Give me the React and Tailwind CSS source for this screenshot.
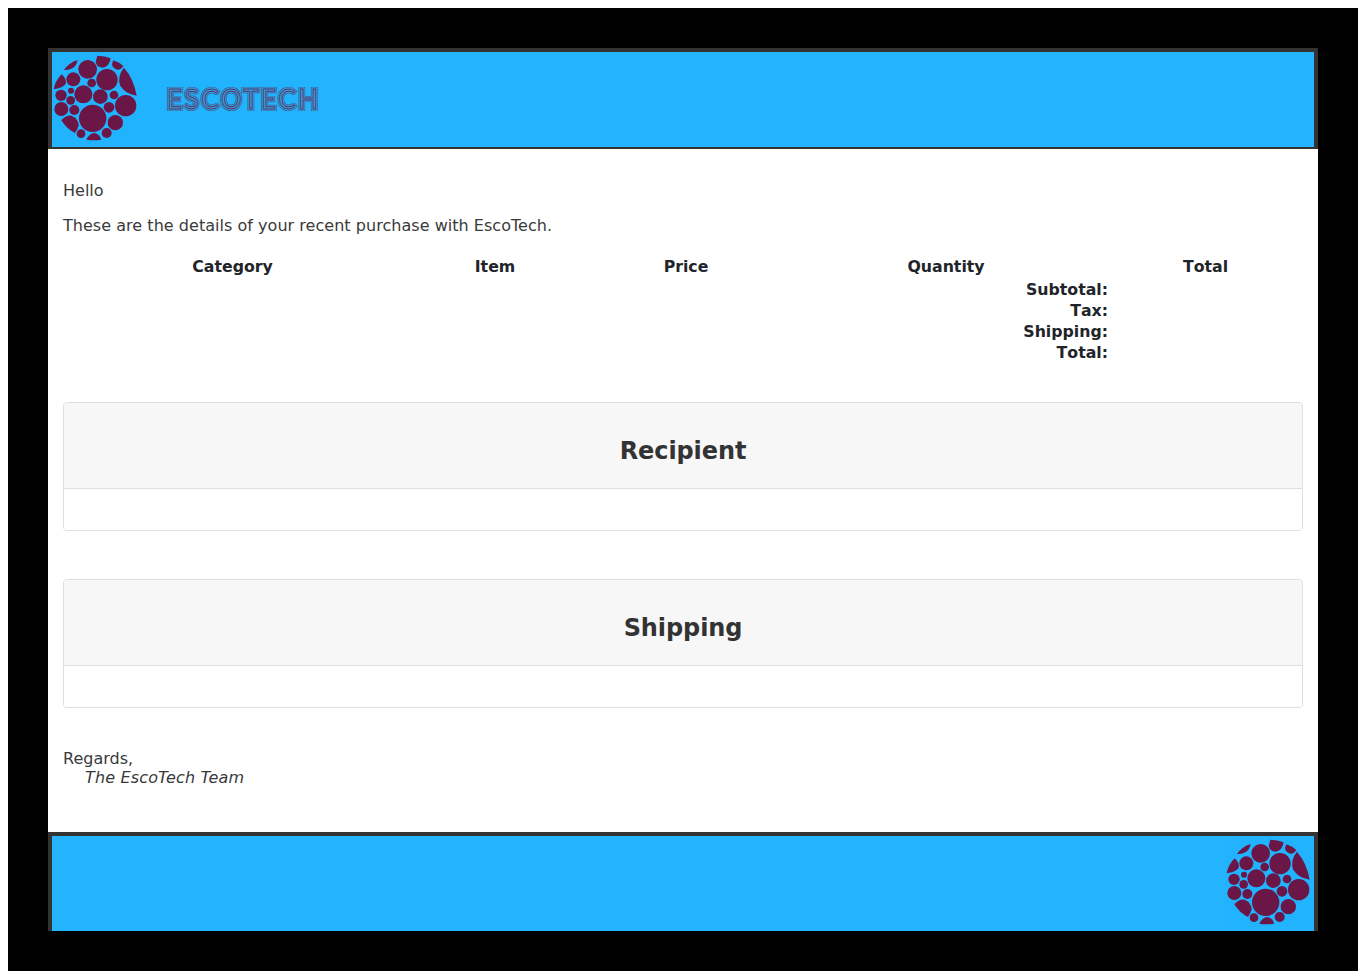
const circles = [
  [113,52,28],[171,83,32],[70,82,21],[125,93,13],[100,127,27],[151,134,22],[63,116,9],[33,130,17],[62,145,13],
  [192,129,13],[227,161,32],[177,166,16],[34,171,21],[73,174,15],[128,199,41],[196,212,23],[93,245,13],[170,243,15],
];
const shapes = [
  "M42 54 Q57 32 83 24 Q79 46 62 51 Q52 55 42 54Z",
  "M142 11 Q165 11 182 19 Q177 46 158 47 Q139 45 137 30Z",
  "M190 25 Q208 31 220 42 Q213 54 202 53 Q187 49 186 36Z",
  "M222 47 Q251 80 260 131 Q225 127 210 100 Q201 72 222 47Z",
  "M35 67 Q51 82 47 96 Q36 109 11 112 Q16 85 35 67Z",
  "M34 205 Q48 189 64 191 Q85 198 86 220 Q83 233 75 243 Q50 231 34 205Z",
  "M109 263 Q119 243 133 243 Q148 245 154 263 Q132 267 109 263Z",
];
function Logo({ className }) {
  return (
    <svg viewBox="0 0 285 285" className={className} aria-hidden="true">
      {circles.map(([x, y, r], i) => <circle key={i} cx={x} cy={y} r={r} fill="#6a1646" />)}
      {shapes.map((d, i) => <path key={i} d={d} fill="#6a1646" />)}
    </svg>
  );
}
function Wordmark() {
  return (
    <svg width="160" height="40" viewBox="0 0 160 40" className="block" role="img">
      <defs>
        <text id="wm" x="2" y="31" fontFamily="Lato, sans-serif" fontSize="26" fontWeight="400" textLength="151" lengthAdjust="spacing">ESCOTECH</text>
      </defs>
      <use href="#wm" fill="none" stroke="#3f5f8e" strokeWidth="4.2" />
      <use href="#wm" fill="none" stroke="#3a9fe0" strokeWidth="2.8" />
      <use href="#wm" fill="none" stroke="#4d3c70" strokeWidth="1" />
    </svg>
  );
}
function Card({ title }) {
  return (
    <div className="border border-[#dfdfdf] rounded-[4px] overflow-hidden">
      <div className="h-[86px] bg-[#f7f7f7] border-b border-[#dfdfdf] flex items-center justify-center pt-[12px]">
        <h3 className="text-[24px] leading-[29px] font-bold text-[#333] tracking-[-0.1px]">{title}</h3>
      </div>
      <div className="h-[41px] bg-white" />
    </div>
  );
}
export default function App() {
  return (
    <div className="bg-white p-2 font-['DejaVu_Sans',sans-serif] text-[16px] leading-[19px] text-[#3a3a3a]">
      <div className="bg-black h-[963px] px-10 pt-10">
        <div className="bg-white">
          <header className="h-[101px] bg-[#25b5fe] border-x-4 border-t-4 border-b-2 border-[#333] flex">
            <div className="w-[269px] h-[92px] bg-[#22b3ff] flex">
              <Logo className="w-[95px] h-[95px] shrink-0 -ml-[2px]" />
              <div className="ml-[20px] mt-[26px]"><Wordmark /></div>
            </div>
          </header>
          <main className="px-[15px] h-[683px] pt-[32px]">
            <p className="mb-4">Hello</p>
            <p className="mb-[19px] tracking-[0.035px]">These are the details of your recent purchase with EscoTech.</p>
            <table className="w-[1240px] table-fixed border-collapse text-[15.75px] text-[#212529] [font-kerning:none]">
              <colgroup>
                <col className="w-[339px]" /><col className="w-[186px]" /><col className="w-[196px]" /><col className="w-[324px]" /><col className="w-[195px]" />
              </colgroup>
              <thead>
                <tr className="h-[25px]">
                  {["Category", "Item", "Price", "Quantity", "Total"].map((h) => <th key={h} className="font-bold text-center p-0 align-top pt-[3px]">{h}</th>)}
                </tr>
              </thead>
              <tfoot>
                {["Subtotal:", "Tax:", "Shipping:", "Total:"].map((h) => (
                  <tr key={h} className="h-[21px]"><th colSpan={4} className="font-bold text-right p-0">{h}</th><td /></tr>
                ))}
              </tfoot>
            </table>
            <div className="mt-[39px]"><Card title="Recipient" /></div>
            <div className="mt-[48px]"><Card title="Shipping" /></div>
            <div className="mt-[41px]">
              <div>Regards,</div>
              <div className="italic pl-[22px] tracking-[0.15px]">The EscoTech Team</div>
            </div>
          </main>
          <footer className="h-[99px] bg-[#25b5fe] border-x-4 border-t-4 border-[#333] border-b-0 flex justify-end">
            <div className="w-[89px] h-[91px] bg-[#22b3ff] overflow-hidden">
              <Logo className="w-[95px] h-[95px] -ml-[2px]" />
            </div>
          </footer>
        </div>
      </div>
    </div>
  );
}
